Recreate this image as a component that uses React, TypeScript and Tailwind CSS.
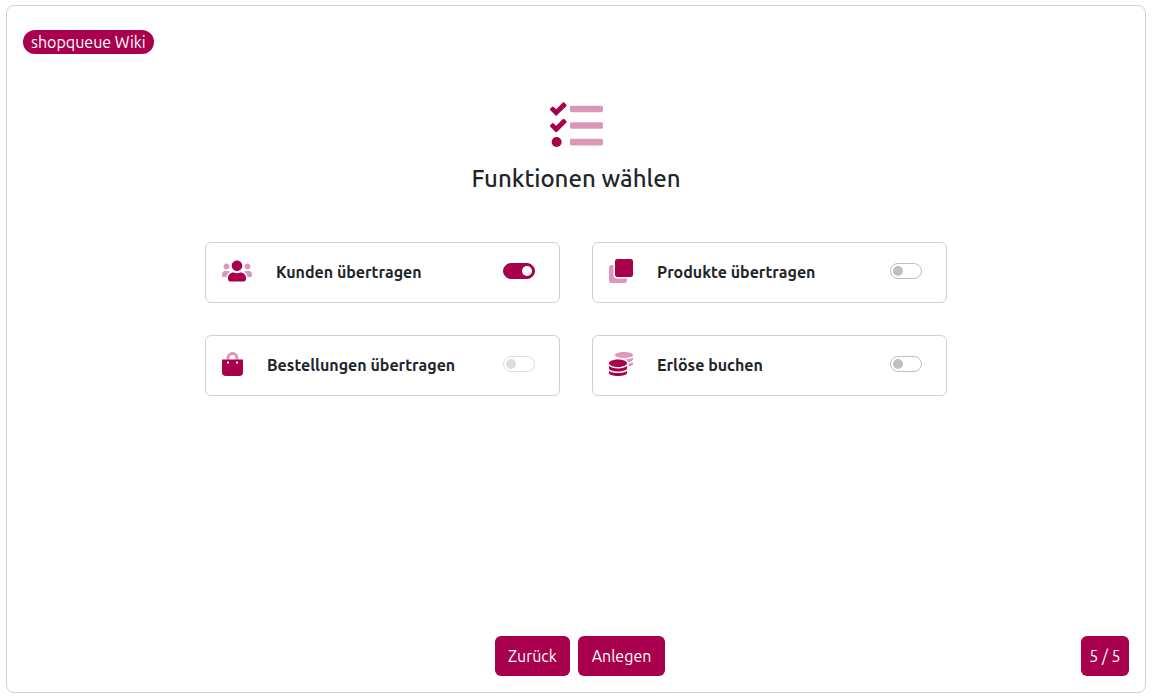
import { ReactNode, useState } from "react"

interface IconProps {
	className?: string
}

function ListIcon({ className }: IconProps) {
	return (
		<svg className={className} viewBox="0 0 512 512" fill="currentColor" aria-hidden="true">
			<g opacity=".4">
				<rect x="192" y="64" width="320" height="64" rx="16" />
				<rect x="192" y="224" width="320" height="64" rx="16" />
				<rect x="192" y="384" width="320" height="64" rx="16" />
			</g>
			<path d="M139.61 35.5a12 12 0 0 0-17 0L58.93 98.81l-22.7-22.12a12 12 0 0 0-17 0L3.53 92.41a12 12 0 0 0 0 17l47.59 47.4a12.78 12.78 0 0 0 17.61 0l15.59-15.62L156.52 69a12.09 12.09 0 0 0 .09-17zm0 159.19a12 12 0 0 0-17 0l-63.68 63.72-22.7-22.1a12 12 0 0 0-17 0L3.53 252a12 12 0 0 0 0 17L51 316.5a12.77 12.77 0 0 0 17.6 0l15.7-15.69 72.2-72.22a12 12 0 0 0 .09-16.9z" />
			<circle cx="64" cy="416" r="48" />
		</svg>
	)
}

function UsersIcon() {
	return (
		<svg className="h-6 w-[30px]" viewBox="0 0 640 512" fill="currentColor" aria-hidden="true">
			<path
				opacity=".4"
				d="M96 224c35.3 0 64-28.7 64-64s-28.7-64-64-64-64 28.7-64 64 28.7 64 64 64zm448 0c35.3 0 64-28.7 64-64s-28.7-64-64-64-64 28.7-64 64 28.7 64 64 64zm32 32h-64c-17.6 0-33.5 7.1-45.1 18.6 40.3 22.1 68.9 62 75.1 109.4h66c17.7 0 32-14.3 32-32v-32c0-35.3-28.7-64-64-64zM173.1 274.6C161.5 263.1 145.6 256 128 256H64c-35.3 0-64 28.7-64 64v32c0 17.7 14.3 32 32 32h65.9c6.3-47.4 34.9-87.3 75.2-109.4z"
			/>
			<path d="M320 256c61.9 0 112-50.1 112-112S381.9 32 320 32 208 82.1 208 144s50.1 112 112 112zm76.8 32h-8.3c-20.8 10-43.9 16-68.5 16s-47.6-6-68.5-16h-8.3C179.6 288 128 339.6 128 403.2V432c0 26.5 21.5 48 48 48h288c26.5 0 48-21.5 48-48v-28.8c0-63.6-51.6-115.2-115.2-115.2z" />
		</svg>
	)
}

function ProductsIcon() {
	return (
		<svg className="size-6" viewBox="0 0 512 512" fill="currentColor" aria-hidden="true">
			<path
				opacity=".4"
				d="M48 512a48 48 0 0 1-48-48V176a48 48 0 0 1 48-48h48v208a80 80 0 0 0 80 80h208v48a48 48 0 0 1-48 48z"
			/>
			<rect x="128" width="384" height="384" rx="48" />
		</svg>
	)
}

function BagIcon() {
	return (
		<svg className="h-6 w-[21px]" viewBox="0 0 448 512" fill="currentColor" aria-hidden="true">
			<path opacity=".4" d="M352 128v32h-64v-32a64 64 0 0 0-128 0v32H96v-32a128 128 0 0 1 256 0z" />
			<path
				fillRule="evenodd"
				d="M0 160v272a80 80 0 0 0 80 80h288a80 80 0 0 0 80-80V160zm128 88a24 24 0 1 1 0-48 24 24 0 0 1 0 48zm192 0a24 24 0 1 1 0-48 24 24 0 0 1 0 48z"
			/>
		</svg>
	)
}

function CoinsIcon() {
	return (
		<svg className="size-6" viewBox="0 0 512 512" fill="currentColor" aria-hidden="true">
			<path
				opacity=".4"
				d="M320 128c106 0 192-28.7 192-64S426 0 320 0 128 28.7 128 64s86 64 192 64zM416 311.4c57.3-11.1 96-31.7 96-55.4v-42.7c-23.2 16.4-57.3 27.6-96 34.5v63.6zM411.3 216.3c60-10.8 100.7-32 100.7-56.3v-42.7c-35.5 25.1-96.5 38.6-160.7 41.8 29.5 14.3 51.2 33.5 60 57.2z"
			/>
			<path d="M0 405.3V448c0 35.3 86 64 192 64s192-28.7 192-64v-42.7C342.7 434.4 267.2 448 192 448S41.3 434.4 0 405.3zM0 300.4V352c0 35.3 86 64 192 64s192-28.7 192-64v-51.6c-41.3 34-116.9 51.6-192 51.6S41.3 334.4 0 300.4zM192 160C86 160 0 195.8 0 240s86 80 192 80 192-35.8 192-80-86-80-192-80z" />
		</svg>
	)
}

interface FeatureProps {
	id: string
	title: string
	icon: ReactNode
	checked: boolean
	disabled?: boolean
	onChange: () => void
}

function FeatureCard({ id, title, icon, checked, disabled, onChange }: FeatureProps) {
	return (
		<div className="flex h-[61px] items-center rounded-md border border-[#d0d0d0] pr-6 pb-[3px] pl-4">
			<span className="text-[#a8004c]">{icon}</span>
			<label htmlFor={id} className="ml-6 flex-1 pt-0.5 font-bold">{title}</label>
			<input
				id={id}
				type="checkbox"
				role="switch"
				checked={checked}
				disabled={disabled}
				onChange={onChange}
				className="flex h-4 w-8 appearance-none items-center rounded-full border border-[#bfbfbf] bg-white px-0.5 before:size-2.5 before:rounded-full before:bg-[#bfbfbf] checked:justify-end checked:border-[#a8004c] checked:bg-[#a8004c] checked:before:bg-white disabled:opacity-50"
			/>
		</div>
	)
}

const features = [
	{ id: "customers", title: "Kunden übertragen", icon: <UsersIcon /> },
	{ id: "products", title: "Produkte übertragen", icon: <ProductsIcon /> },
	{ id: "orders", title: "Bestellungen übertragen", icon: <BagIcon />, needs: "products" },
	{ id: "revenue", title: "Erlöse buchen", icon: <CoinsIcon /> },
]

export default function App() {
	const [active, setActive] = useState<string[]>(["customers"])

	const toggle = (id: string) => {
		setActive(active.includes(id) ? active.filter((a) => a !== id) : [...active, id])
	}

	return (
		<div className="flex min-h-screen bg-white pt-[5px] pr-[7px] pb-[7px] pl-[6px] font-[Ubuntu,'Noto_Sans',sans-serif] text-base text-[#212529]">
			<div className="flex flex-1 flex-col rounded-lg border border-[#d0d0d0] px-4 pt-6 pb-4">
				<header className="flex">
					<a href="#wiki" className="rounded-full bg-[#a8004c] px-2 text-white">shopqueue Wiki</a>
				</header>

				<main className="flex flex-1 flex-col items-center pt-[45px]">
					<ListIcon className="size-[53px] text-[#a8004c]" />
					<h1 className="mt-3 text-2xl leading-[30px] font-medium">Funktionen wählen</h1>

					<div className="mt-12 grid w-full max-w-[742px] grid-cols-2 gap-8">
						{features.map((f) => (
							<FeatureCard
								key={f.id}
								id={f.id}
								title={f.title}
								icon={f.icon}
								checked={active.includes(f.id)}
								disabled={!!f.needs && !active.includes(f.needs)}
								onChange={() => toggle(f.id)}
							/>
						))}
					</div>
				</main>

				<footer className="grid grid-cols-[1fr_auto_1fr] items-center">
					<div className="col-start-2 flex gap-2 pl-2">
						<button type="button" className="h-10 w-[75px] rounded-md bg-[#a8004c] text-white">Zurück</button>
						<button type="button" className="h-10 w-[87px] rounded-md bg-[#a8004c] text-white">Anlegen</button>
					</div>
					<span className="flex h-10 w-12 items-center justify-center justify-self-end rounded-md bg-[#a8004c] text-white">5 / 5</span>
				</footer>
			</div>
		</div>
	)
}
